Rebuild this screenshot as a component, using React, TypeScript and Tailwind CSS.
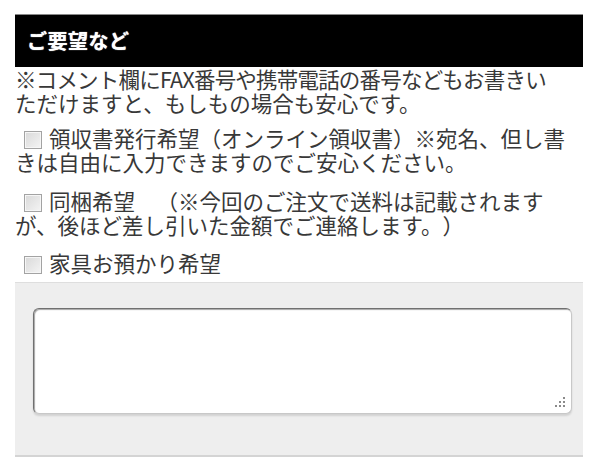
import React from 'react';

const font = { fontFamily: '"Noto Sans CJK JP", "Noto Sans", sans-serif' };

function Box() {
  return (
    <span className="inline-block align-[-2px] w-[18px] h-[18px] ml-[9px] mr-[7px] border border-[#a3a3a3] bg-gradient-to-br from-[#d9d9d9] to-[#f4f4f4] shadow-[inset_0_0_0_1px_#f6f6f6]" />
  );
}

function ResizeDots() {
  const dots = [
    [10, 2],
    [10, 6],
    [6, 6],
    [10, 10],
    [6, 10],
    [2, 10],
  ];
  return (
    <svg className="absolute right-[6px] bottom-[6px]" width="13" height="13" viewBox="0 0 13 13">
      {dots.map(([x, y], i) => (
        <rect key={i} x={x} y={y} width="2" height="2" fill="#8a8a8a" />
      ))}
    </svg>
  );
}

export default function App() {
  return (
    <div className="w-[600px] h-[470px] bg-white pt-[14px] px-[15px]" style={font}>
      <div className="w-[568px]">
        {/* Header */}
        <div className="h-[53px] bg-black flex items-center pl-[12px] border-t border-[#888]">
          <h2 className="text-white text-[20px] font-bold tracking-[0.5px] [text-shadow:0_0_1px_#fff]">ご要望など</h2>
        </div>

        <div className="text-[21.5px] leading-[24px] text-[#383838] whitespace-nowrap [text-spacing-trim:space-all]">
          <p>
            <span className="tracking-[-0.8px]">※コメント欄にFAX番号や携帯電話の番号などもお書きい</span>
            <br />
            ただけますと、もしもの場合も安心です。
          </p>

          <p className="mt-[11px]">
            <label>
              <Box />
              領収書発行希望（オンライン領収書）※宛名、但し書
            </label>
            <br />
            きは自由に入力できますのでご安心ください。
          </p>

          <p className="mt-[15px]">
            <label>
              <Box />
              同梱希望　（※今回のご注文で送料は記載されます
            </label>
            <br />
            が、後ほど差し引いた金額でご連絡します。）
          </p>

          <p className="mt-[14px]">
            <label>
              <Box />
              家具お預かり希望
            </label>
          </p>
        </div>

        {/* Comment box */}
        <div className="mt-[7px] bg-[#eeeeee] border-t border-[#dedede] border-b-2 border-b-[#d4d4d4] pt-[25px] pb-[41px] pl-[18px] pr-[11px]">
          <div className="relative">
            <textarea
              className="block w-full h-[106px] resize-none bg-white rounded-[6px] border border-[#c8c8c8] border-t-[#707070] border-l-[#707070] shadow-[inset_1px_1px_1px_rgba(0,0,0,0.35),0_2px_2px_rgba(0,0,0,0.12)] outline-none p-2 text-[16px]"
            />
            <ResizeDots />
          </div>
        </div>
      </div>
    </div>
  );
}
